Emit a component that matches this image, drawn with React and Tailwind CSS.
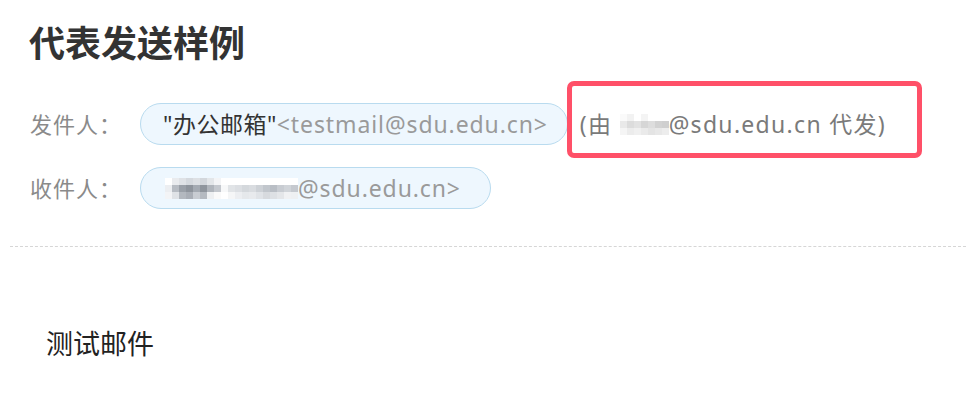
import React from "react";

const F = { fontFamily: '"Noto Sans", "Noto Sans CJK SC", sans-serif' };

function Pix({ cols, size = 7 }) {
  return (
    <span className="inline-flex align-middle">
      {cols.map((c, i) => (
        <span key={i} className="flex flex-col">
          {c.map((col, j) => (
            <span key={j} style={{ width: size, height: size, background: col }} />
          ))}
        </span>
      ))}
    </span>
  );
}

const blur1 = [
  ["#fff", "#eceef1", "#f3f4f6"],
  ["#e9ebee", "#b7bcc3", "#dfe2e6"],
  ["#dfe2e6", "#9aa0a8", "#b3b8bf"],
  ["#d5d9de", "#8e949c", "#a9aeb6"],
  ["#dde0e4", "#a4aab2", "#c8ccd2"],
  ["#d3d7dc", "#8f959d", "#b5bac1"],
  ["#e3e6e9", "#b0b5bc", "#eef0f2"],
  ["#f3f4f6", "#c4c8ce", "#fafafa"],
  ["#fff", "#f7f8f9", "#fff"],
  ["#fff", "#e1e4e7", "#f5f6f7"],
  ["#fff", "#dcdfe3", "#eceef1"],
  ["#fff", "#d4d8dc", "#e5e8eb"],
  ["#fff", "#d9dce0", "#e8eaed"],
  ["#fff", "#cdd1d6", "#e0e3e7"],
  ["#fff", "#c1c6cc", "#d7dade"],
  ["#fff", "#b9bec5", "#dde0e4"],
  ["#fff", "#c8ccd2", "#e4e6e9"],
  ["#fff", "#d0d4d9", "#f0f1f3"],
  ["#fff", "#c5c9cf", "#eef0f2"],
];

const blur2 = [
  ["#fafafa", "#e9e9e9", "#f5f5f5"],
  ["#f2f2f2", "#dcdcdc", "#ececec"],
  ["#fff", "#e2e2e2", "#f0f0f0"],
  ["#f4f4f4", "#d6d6d6", "#eaeaea"],
  ["#fff", "#dddddd", "#e4e4e4"],
  ["#fff", "#d2d2d2", "#e8e8e8"],
  ["#fff", "#cfcfcf", "#ededed"],
];

export default function App() {
  return (
    <div className="relative w-[966px] h-[408px] overflow-hidden bg-white" style={F}>
      <h1 className="pl-[29px] pt-[20px] text-[36px] leading-[48px] font-bold text-[#333]">
        代表发送样例
      </h1>

      <div className="pl-[30px] mt-[35px] flex flex-col gap-[22px]">
        <div className="flex items-center">
          <span className="w-[110px] text-[22px] text-[#8a8a8a] tracking-[1px]">发件人：</span>
          <span className="h-[42px] flex items-center rounded-full border border-[#b9dbef] bg-[#eef7fe] pl-[22px] pr-[19px] text-[23px]">
            <span className="text-[#333] tracking-[0.5px]">"办公邮箱"</span>
            <span className="text-[#9a9a9a] tracking-[0.9px]">&lt;testmail@sdu.edu.cn&gt;</span>
          </span>
          <span className="ml-[12px] flex items-center text-[23px] text-[#7a7a7a] tracking-[1.3px]">
            (由&nbsp;
            <Pix cols={blur2} />
            @sdu.edu.cn 代发)
          </span>
        </div>
        <div className="flex items-center">
          <span className="w-[110px] text-[22px] text-[#8a8a8a] tracking-[1px]">收件人：</span>
          <span className="h-[42px] flex items-center rounded-full border border-[#b9dbef] bg-[#eef7fe] pl-[24px] pr-[29px] text-[23px] text-[#9a9a9a] tracking-[0.9px]">
            <Pix cols={blur1} />
            @sdu.edu.cn&gt;
          </span>
        </div>
      </div>

      <div className="ml-[10px] mt-[37px] border-t border-dashed border-[#d6d6d6]" />

      <p className="pl-[46px] mt-[77px] text-[27px] text-[#222]">测试邮件</p>

      <div className="absolute left-[567px] top-[81px] w-[355px] h-[77px] rounded-[7px] border-[5px] border-[#ff5068]" />
    </div>
  );
}
